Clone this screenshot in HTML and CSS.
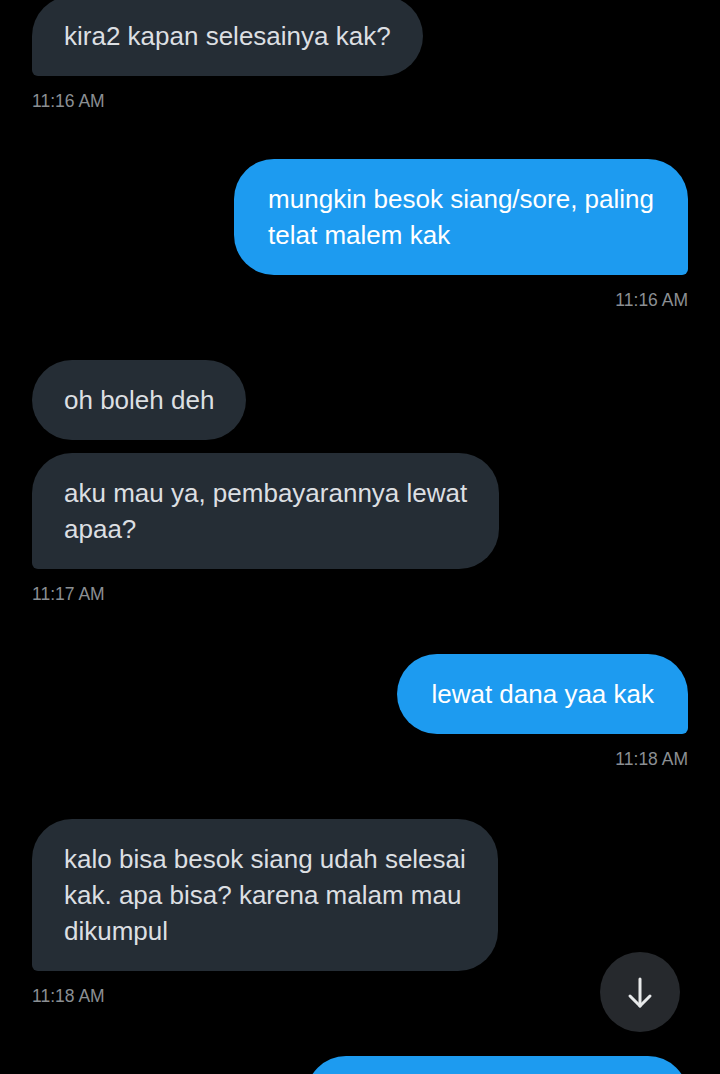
FILE: index.html
```html
<!DOCTYPE html>
<html lang="id">
<head>
    <meta charset="UTF-8">
    <meta name="viewport" content="width=device-width, initial-scale=1.0">
    <title>Pesan</title>
    <link rel="stylesheet" href="styles.css">
</head>
<body>
    <main class="chat">
        <div class="group in first">
            <div class="bubble last">kira2 kapan selesainya kak?</div>
            <div class="time">11:16 AM</div>
        </div>

        <div class="group out">
            <div class="bubble last">mungkin besok siang/sore, paling<br>telat malem kak</div>
            <div class="time">11:16 AM</div>
        </div>

        <div class="group in">
            <div class="bubble">oh boleh deh</div>
            <div class="bubble last">aku mau ya, pembayarannya lewat<br>apaa?</div>
            <div class="time">11:17 AM</div>
        </div>

        <div class="group out">
            <div class="bubble last">lewat dana yaa kak</div>
            <div class="time">11:18 AM</div>
        </div>

        <div class="group in">
            <div class="bubble last">kalo bisa besok siang udah selesai<br>kak. apa bisa? karena malam mau<br>dikumpul</div>
            <div class="time">11:18 AM</div>
        </div>

        <div class="group out">
            <div class="bubble last cut"></div>
        </div>
    </main>

    <button class="scroll-down" aria-label="Scroll ke bawah">
        <svg width="36" height="36" viewBox="0 0 36 36" fill="none" stroke="#e7e9ea" stroke-width="3" stroke-linecap="round" stroke-linejoin="round">
            <path d="M18 5 V32"/>
            <path d="M8 22 L18 32 L28 22"/>
        </svg>
    </button>
</body>
</html>
```

FILE: styles.css
```css
* {
    box-sizing: border-box;
}

html, body {
    height: 100%;
}

body {
    margin: 0;
    background-color: #000;
    font-family: "Liberation Sans", Arial, sans-serif;
    overflow: hidden;
}

.chat {
    padding: 0 32px;
    display: flex;
    flex-direction: column;
}

.group {
    display: flex;
    flex-direction: column;
    gap: 13px;
    margin-bottom: 50px;
}

.group.first {
    margin-top: -4px;
    margin-bottom: 48px;
}

.group.in {
    align-items: flex-start;
}

.group.out {
    align-items: flex-end;
}

.bubble {
    padding: 22px 32px;
    font-size: 26px;
    line-height: 36px;
    white-space: nowrap;
    border-radius: 40px;
}

.out .bubble {
    padding-left: 34px;
    padding-right: 34px;
}

.in .bubble {
    background-color: #252d35;
    color: #dcdfe2;
}

.in .bubble.last {
    border-bottom-left-radius: 6px;
}

.out .bubble {
    background-color: #1d9bf0;
    color: #fff;
}

.out .bubble.last {
    border-bottom-right-radius: 6px;
}

.bubble.cut {
    width: 382px;
    height: 80px;
}

.time {
    margin-top: 2px;
    font-size: 17.5px;
    line-height: 20px;
    color: #8b8f93;
}

.scroll-down {
    position: absolute;
    left: 600px;
    top: 952px;
    width: 80px;
    height: 80px;
    border: none;
    border-radius: 50%;
    background-color: #26292d;
    display: flex;
    align-items: center;
    justify-content: center;
    padding: 0;
}
```
